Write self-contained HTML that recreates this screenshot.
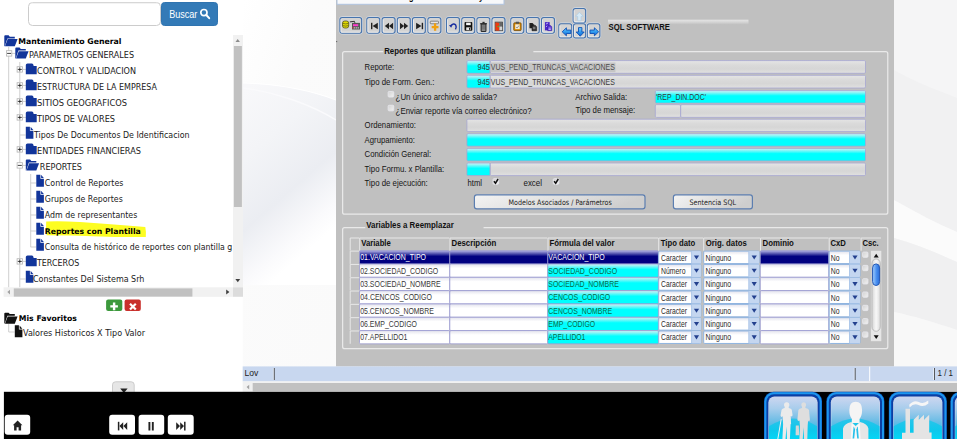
<!DOCTYPE html>
<html><head><meta charset="utf-8"><title>Mantenimiento General</title>
<style>
html,body{margin:0;padding:0;background:#fff;}
body{width:957px;height:439px;overflow:hidden;position:relative;font-family:"Liberation Sans",sans-serif;}
svg{position:absolute;left:0;top:0;display:block;}
text{white-space:pre;}
</style></head><body>
<svg width="957" height="439" viewBox="0 0 957 439">
<defs>
<linearGradient id="gf" x1="0" y1="0" x2="0" y2="1"><stop offset="0" stop-color="#e5e5e5"/><stop offset=".35" stop-color="#dadada"/><stop offset=".65" stop-color="#d6d6d6"/><stop offset="1" stop-color="#e0e0e0"/></linearGradient>
<linearGradient id="gc" x1="0" y1="0" x2="0" y2="1"><stop offset="0" stop-color="#c4f6f8"/><stop offset=".12" stop-color="#a0f4f6"/><stop offset=".42" stop-color="#00ffff"/><stop offset="1" stop-color="#00ffff"/></linearGradient>
<linearGradient id="gw" x1="0" y1="0" x2="0" y2="1"><stop offset="0" stop-color="#e2e2ec"/><stop offset=".32" stop-color="#ffffff"/><stop offset="1" stop-color="#ffffff"/></linearGradient>
<linearGradient id="gs" x1="0" y1="0" x2="0" y2="1"><stop offset="0" stop-color="#b0b0e4"/><stop offset=".42" stop-color="#000080"/><stop offset="1" stop-color="#000080"/></linearGradient>
<linearGradient id="gb" x1="0" y1="0" x2="1" y2="0.25"><stop offset="0" stop-color="#f4f4f4"/><stop offset=".6" stop-color="#dedede"/><stop offset="1" stop-color="#cecece"/></linearGradient>
<linearGradient id="gk" x1="0" y1="0" x2="1" y2="1"><stop offset="0" stop-color="#d2d2d2"/><stop offset="1" stop-color="#f2f2f2"/></linearGradient>
<linearGradient id="gth" x1="0" y1="0" x2="1" y2="0"><stop offset="0" stop-color="#a4d0ff"/><stop offset=".55" stop-color="#4a90f0"/><stop offset="1" stop-color="#2a6cd8"/></linearGradient>
<linearGradient id="gtr" x1="0" y1="0" x2="1" y2="0"><stop offset="0" stop-color="#d6d6d6"/><stop offset=".5" stop-color="#f8f8f8"/><stop offset="1" stop-color="#dcdcdc"/></linearGradient>
<linearGradient id="garr" x1="0" y1="0" x2="0" y2="1"><stop offset="0" stop-color="#7ad2ff"/><stop offset=".5" stop-color="#2f9cf0"/><stop offset="1" stop-color="#1262d4"/></linearGradient>
<linearGradient id="gbar" x1="0" y1="0" x2="0" y2="1"><stop offset="0" stop-color="#e4e4e4"/><stop offset=".5" stop-color="#d6d6d6"/><stop offset="1" stop-color="#c2c2c2"/></linearGradient>
<linearGradient id="gtile" x1="0" y1="0" x2="0" y2="1"><stop offset="0" stop-color="#ccd6f0"/><stop offset=".2" stop-color="#a8cdec"/><stop offset=".4" stop-color="#70bee6"/><stop offset=".55" stop-color="#3cbce8"/></linearGradient>
<linearGradient id="gdome" x1="0" y1="0" x2="0" y2="1"><stop offset="0" stop-color="#2cc4ea"/><stop offset=".35" stop-color="#0cc8ec"/><stop offset=".7" stop-color="#00dcfa"/></linearGradient>
<linearGradient id="gdesk" x1="0" y1="0" x2="1" y2="0.2"><stop offset="0" stop-color="#ffffff"/><stop offset=".1" stop-color="#fbfbfb"/><stop offset="1" stop-color="#f6f6f7"/></linearGradient>
<linearGradient id="gsw" x1="0.1" y1="0" x2="0.5" y2="1"><stop offset="0" stop-color="#f8f8fa"/><stop offset=".3" stop-color="#f3f4f7"/><stop offset=".6" stop-color="#ebedf2"/><stop offset=".82" stop-color="#fafafc"/><stop offset=".92" stop-color="#ffffff"/></linearGradient>
<clipPath id="cptree"><rect x="0" y="30" width="233" height="257.5"/></clipPath>
<clipPath id="cpmenu"><rect x="337" y="0" width="167" height="4.5"/></clipPath>
</defs>

<rect x="242.7" y="0" width="715" height="392" fill="url(#gdesk)"/>
<path d="M243 83 C275 84 310 90 336 100 L336 285 L243 285Z" fill="url(#gsw)"/>
<path d="M243 83 C275 84 310 90 336 100" stroke="#fff" stroke-width="1.2" fill="none"/><path d="M243 88 C275 92 310 104 336 120" stroke="#fafafc" stroke-width="1.4" fill="none"/>
<path d="M894 0 L957 0 L957 392 L894 392Z" fill="#f5f5f6"/><path d="M894 70 C923 86 943 92 957 98 L957 232 C940 225 915 212 894 200Z" fill="#f1f1f2"/><path d="M894 200 C915 212 940 225 957 232 L957 262 C935 252 915 244 894 238Z" fill="#fbfbfb"/><path d="M894 238 C915 244 935 252 957 262 L957 330 C933 322 913 316 894 312Z" fill="#f0f0f1"/><path d="M894 312 C913 316 933 322 957 330 L957 392 L894 392Z" fill="#f8f8f8"/>
<rect x="28.50" y="2.50" width="132.00" height="23.00" fill="#fff" stroke="#ccc" stroke-width="1" rx="4"/>
<path d="M31 3.2 L158 3.2" stroke="#eee" stroke-width="1" fill="none"/>
<rect x="161.50" y="2.50" width="56.00" height="23.00" fill="#337ab7" stroke="#3074b0" stroke-width="1" rx="3"/>
<text x="169.2" y="18.32" font-family="Liberation Sans, sans-serif" font-size="10.4" fill="#fff" textLength="28.2" lengthAdjust="spacingAndGlyphs">Buscar</text>
<g transform="translate(199.5 8.2)"><circle cx="4.4" cy="4.4" r="3.1" fill="none" stroke="#fff" stroke-width="1.7"/><path d="M6.8 6.8 L9.7 10" stroke="#fff" stroke-width="2" stroke-linecap="round"/></g>
<g clip-path="url(#cptree)">
<path d="M8.7 47 L8.7 288" stroke="#cfcfcf" stroke-width="1" fill="none"/>
<path d="M19.8 62 L19.8 288" stroke="#cfcfcf" stroke-width="1" fill="none"/>
<path d="M30.7 174 L30.7 247" stroke="#cfcfcf" stroke-width="1" fill="none"/>
<path d="M46.2 221.6 Q58 220.6 80 222.1 Q115 224.6 145.3 227 Q146.2 231 145.8 237 Q120 237.4 100 236.4 Q70 235.4 46.6 235.3 Q45.6 228 46.2 221.6Z" fill="#fdfd22"/>
<g transform="translate(4 35.0)"><path d="M0.3 11.2 L0.3 1.3 Q0.3 0.3 1.2 0.3 L4.6 0.3 L5.8 1.7 L10.8 1.7 L10.8 3.4 L3.4 3.4 L0.8 11.2Z" fill="#12359a"/><path d="M3.7 4.1 L13.6 4.1 L10.8 11.3 L1 11.3Z" fill="#12359a"/></g>
<text x="18.3" y="44.05" font-family="DejaVu Sans, Liberation Sans, sans-serif" font-size="7.8" fill="#000" font-weight="bold" textLength="103.2" lengthAdjust="spacingAndGlyphs">Mantenimiento General</text>
<path d="M11.8 53.4 L15.5 53.4" stroke="#cfcfcf" stroke-width="1" fill="none"/>
<g transform="translate(6 50.3)"><rect x="0.4" y="0.4" width="5.4" height="5.4" fill="#fff" stroke="#b4b4b4" stroke-width=".8"/><path d="M1.1 3.1 L5.1 3.1" stroke="#111" stroke-width=".8"/></g>
<g transform="translate(15 47.2)"><path d="M0.3 11.2 L0.3 1.3 Q0.3 0.3 1.2 0.3 L4.6 0.3 L5.8 1.7 L10.8 1.7 L10.8 3.4 L3.4 3.4 L0.8 11.2Z" fill="#12359a"/><path d="M3.7 4.1 L13.6 4.1 L10.8 11.3 L1 11.3Z" fill="#12359a"/></g>
<text x="29" y="58.12" font-family="DejaVu Sans, Liberation Sans, sans-serif" font-size="8" fill="#1a1a1a" textLength="105" lengthAdjust="spacingAndGlyphs">PARAMETROS GENERALES</text>
<path d="M22.5 69.4 L26.0 69.4" stroke="#cfcfcf" stroke-width="1" fill="none"/>
<g transform="translate(16.7 66.3)"><rect x="0.4" y="0.4" width="5.4" height="5.4" fill="#fff" stroke="#b4b4b4" stroke-width=".8"/><path d="M1.1 3.1 L5.1 3.1" stroke="#111" stroke-width=".8"/><path d="M3.1 1.1 L3.1 5.1" stroke="#111" stroke-width=".8"/></g>
<g transform="translate(25.5 63.3)"><path d="M0.3 1.8 Q0.3 0.2 2 0.2 L6.4 0.2 Q7.8 0.2 8.2 2.6 L11.2 2.6 L11.2 11 L0.3 11Z" fill="#12359a"/></g>
<text x="37" y="74.12" font-family="DejaVu Sans, Liberation Sans, sans-serif" font-size="8" fill="#1a1a1a" textLength="99" lengthAdjust="spacingAndGlyphs">CONTROL Y VALIDACION</text>
<path d="M22.5 85.4 L26.0 85.4" stroke="#cfcfcf" stroke-width="1" fill="none"/>
<g transform="translate(16.7 82.3)"><rect x="0.4" y="0.4" width="5.4" height="5.4" fill="#fff" stroke="#b4b4b4" stroke-width=".8"/><path d="M1.1 3.1 L5.1 3.1" stroke="#111" stroke-width=".8"/><path d="M3.1 1.1 L3.1 5.1" stroke="#111" stroke-width=".8"/></g>
<g transform="translate(25.5 79.3)"><path d="M0.3 1.8 Q0.3 0.2 2 0.2 L6.4 0.2 Q7.8 0.2 8.2 2.6 L11.2 2.6 L11.2 11 L0.3 11Z" fill="#12359a"/></g>
<text x="37" y="90.12" font-family="DejaVu Sans, Liberation Sans, sans-serif" font-size="8" fill="#1a1a1a" textLength="120" lengthAdjust="spacingAndGlyphs">ESTRUCTURA DE LA EMPRESA</text>
<path d="M22.5 101.4 L26.0 101.4" stroke="#cfcfcf" stroke-width="1" fill="none"/>
<g transform="translate(16.7 98.3)"><rect x="0.4" y="0.4" width="5.4" height="5.4" fill="#fff" stroke="#b4b4b4" stroke-width=".8"/><path d="M1.1 3.1 L5.1 3.1" stroke="#111" stroke-width=".8"/><path d="M3.1 1.1 L3.1 5.1" stroke="#111" stroke-width=".8"/></g>
<g transform="translate(25.5 95.3)"><path d="M0.3 1.8 Q0.3 0.2 2 0.2 L6.4 0.2 Q7.8 0.2 8.2 2.6 L11.2 2.6 L11.2 11 L0.3 11Z" fill="#12359a"/></g>
<text x="37" y="106.12" font-family="DejaVu Sans, Liberation Sans, sans-serif" font-size="8" fill="#1a1a1a" textLength="90" lengthAdjust="spacingAndGlyphs">SITIOS GEOGRAFICOS</text>
<path d="M22.5 117.4 L26.0 117.4" stroke="#cfcfcf" stroke-width="1" fill="none"/>
<g transform="translate(16.7 114.3)"><rect x="0.4" y="0.4" width="5.4" height="5.4" fill="#fff" stroke="#b4b4b4" stroke-width=".8"/><path d="M1.1 3.1 L5.1 3.1" stroke="#111" stroke-width=".8"/><path d="M3.1 1.1 L3.1 5.1" stroke="#111" stroke-width=".8"/></g>
<g transform="translate(25.5 111.3)"><path d="M0.3 1.8 Q0.3 0.2 2 0.2 L6.4 0.2 Q7.8 0.2 8.2 2.6 L11.2 2.6 L11.2 11 L0.3 11Z" fill="#12359a"/></g>
<text x="37" y="122.12" font-family="DejaVu Sans, Liberation Sans, sans-serif" font-size="8" fill="#1a1a1a" textLength="78" lengthAdjust="spacingAndGlyphs">TIPOS DE VALORES</text>
<path d="M20.0 135 L25.5 135" stroke="#cfcfcf" stroke-width="1" fill="none"/>
<g transform="translate(25.5 126.4)"><path d="M0.3 0.3 L4.4 0.3 L4.4 4.4 L7.9 4.4 L7.9 12.3 L0.3 12.3Z" fill="#12359a"/><path d="M5.1 0.4 L7.8 3.7 L5.1 3.7Z" fill="#12359a"/></g>
<text x="34" y="138.12" font-family="DejaVu Sans, Liberation Sans, sans-serif" font-size="8" fill="#1a1a1a" textLength="155.5" lengthAdjust="spacingAndGlyphs">Tipos De Documentos De Identificacion</text>
<path d="M22.5 149.4 L26.0 149.4" stroke="#cfcfcf" stroke-width="1" fill="none"/>
<g transform="translate(16.7 146.3)"><rect x="0.4" y="0.4" width="5.4" height="5.4" fill="#fff" stroke="#b4b4b4" stroke-width=".8"/><path d="M1.1 3.1 L5.1 3.1" stroke="#111" stroke-width=".8"/><path d="M3.1 1.1 L3.1 5.1" stroke="#111" stroke-width=".8"/></g>
<g transform="translate(25.5 143.3)"><path d="M0.3 1.8 Q0.3 0.2 2 0.2 L6.4 0.2 Q7.8 0.2 8.2 2.6 L11.2 2.6 L11.2 11 L0.3 11Z" fill="#12359a"/></g>
<text x="37" y="154.12" font-family="DejaVu Sans, Liberation Sans, sans-serif" font-size="8" fill="#1a1a1a" textLength="104" lengthAdjust="spacingAndGlyphs">ENTIDADES FINANCIERAS</text>
<path d="M22.5 165.4 L26.0 165.4" stroke="#cfcfcf" stroke-width="1" fill="none"/>
<g transform="translate(16.7 162.3)"><rect x="0.4" y="0.4" width="5.4" height="5.4" fill="#fff" stroke="#b4b4b4" stroke-width=".8"/><path d="M1.1 3.1 L5.1 3.1" stroke="#111" stroke-width=".8"/></g>
<g transform="translate(25.5 159.2)"><path d="M0.3 11.2 L0.3 1.3 Q0.3 0.3 1.2 0.3 L4.6 0.3 L5.8 1.7 L10.8 1.7 L10.8 3.4 L3.4 3.4 L0.8 11.2Z" fill="#12359a"/><path d="M3.7 4.1 L13.6 4.1 L10.8 11.3 L1 11.3Z" fill="#12359a"/></g>
<text x="39.8" y="170.12" font-family="DejaVu Sans, Liberation Sans, sans-serif" font-size="8" fill="#1a1a1a" textLength="42.2" lengthAdjust="spacingAndGlyphs">REPORTES</text>
<path d="M30.5 183 L36 183" stroke="#cfcfcf" stroke-width="1" fill="none"/>
<g transform="translate(36 174.4)"><path d="M0.3 0.3 L4.4 0.3 L4.4 4.4 L7.9 4.4 L7.9 12.3 L0.3 12.3Z" fill="#12359a"/><path d="M5.1 0.4 L7.8 3.7 L5.1 3.7Z" fill="#12359a"/></g>
<text x="44.8" y="186.12" font-family="DejaVu Sans, Liberation Sans, sans-serif" font-size="8" fill="#1a1a1a" textLength="78.6" lengthAdjust="spacingAndGlyphs">Control de Reportes</text>
<path d="M30.5 199 L36 199" stroke="#cfcfcf" stroke-width="1" fill="none"/>
<g transform="translate(36 190.4)"><path d="M0.3 0.3 L4.4 0.3 L4.4 4.4 L7.9 4.4 L7.9 12.3 L0.3 12.3Z" fill="#12359a"/><path d="M5.1 0.4 L7.8 3.7 L5.1 3.7Z" fill="#12359a"/></g>
<text x="44.8" y="202.12" font-family="DejaVu Sans, Liberation Sans, sans-serif" font-size="8" fill="#1a1a1a" textLength="78" lengthAdjust="spacingAndGlyphs">Grupos de Reportes</text>
<path d="M30.5 215 L36 215" stroke="#cfcfcf" stroke-width="1" fill="none"/>
<g transform="translate(36 206.4)"><path d="M0.3 0.3 L4.4 0.3 L4.4 4.4 L7.9 4.4 L7.9 12.3 L0.3 12.3Z" fill="#12359a"/><path d="M5.1 0.4 L7.8 3.7 L5.1 3.7Z" fill="#12359a"/></g>
<text x="44.8" y="218.12" font-family="DejaVu Sans, Liberation Sans, sans-serif" font-size="8" fill="#1a1a1a" textLength="92.5" lengthAdjust="spacingAndGlyphs">Adm de representantes</text>
<path d="M30.5 231 L36 231" stroke="#cfcfcf" stroke-width="1" fill="none"/>
<g transform="translate(36 222.4)"><path d="M0.3 0.3 L4.4 0.3 L4.4 4.4 L7.9 4.4 L7.9 12.3 L0.3 12.3Z" fill="#12359a"/><path d="M5.1 0.4 L7.8 3.7 L5.1 3.7Z" fill="#12359a"/></g>
<text x="44.8" y="234.05" font-family="DejaVu Sans, Liberation Sans, sans-serif" font-size="7.8" fill="#000" font-weight="bold" textLength="96" lengthAdjust="spacingAndGlyphs">Reportes con Plantilla</text>
<path d="M30.5 247 L36 247" stroke="#cfcfcf" stroke-width="1" fill="none"/>
<g transform="translate(36 238.4)"><path d="M0.3 0.3 L4.4 0.3 L4.4 4.4 L7.9 4.4 L7.9 12.3 L0.3 12.3Z" fill="#12359a"/><path d="M5.1 0.4 L7.8 3.7 L5.1 3.7Z" fill="#12359a"/></g>
<text x="44.8" y="250.12" font-family="DejaVu Sans, Liberation Sans, sans-serif" font-size="8" fill="#1a1a1a" textLength="187.5" lengthAdjust="spacingAndGlyphs">Consulta de histórico de reportes con plantilla g</text>
<path d="M22.5 261.4 L26.0 261.4" stroke="#cfcfcf" stroke-width="1" fill="none"/>
<g transform="translate(16.7 258.3)"><rect x="0.4" y="0.4" width="5.4" height="5.4" fill="#fff" stroke="#b4b4b4" stroke-width=".8"/><path d="M1.1 3.1 L5.1 3.1" stroke="#111" stroke-width=".8"/><path d="M3.1 1.1 L3.1 5.1" stroke="#111" stroke-width=".8"/></g>
<g transform="translate(25.5 255.3)"><path d="M0.3 1.8 Q0.3 0.2 2 0.2 L6.4 0.2 Q7.8 0.2 8.2 2.6 L11.2 2.6 L11.2 11 L0.3 11Z" fill="#12359a"/></g>
<text x="37" y="266.12" font-family="DejaVu Sans, Liberation Sans, sans-serif" font-size="8" fill="#1a1a1a" textLength="42.3" lengthAdjust="spacingAndGlyphs">TERCEROS</text>
<path d="M20.0 279 L25.5 279" stroke="#cfcfcf" stroke-width="1" fill="none"/>
<g transform="translate(25.5 270.4)"><path d="M0.3 0.3 L4.4 0.3 L4.4 4.4 L7.9 4.4 L7.9 12.3 L0.3 12.3Z" fill="#12359a"/><path d="M5.1 0.4 L7.8 3.7 L5.1 3.7Z" fill="#12359a"/></g>
<text x="33" y="282.12" font-family="DejaVu Sans, Liberation Sans, sans-serif" font-size="8" fill="#1a1a1a" textLength="111.4" lengthAdjust="spacingAndGlyphs">Constantes Del Sistema Srh</text>
</g>
<rect x="233" y="35" width="10" height="252.3" fill="#f1f1f1"/>
<rect x="233.9" y="46" width="8" height="161" fill="#c1c1c1"/>
<path d="M235.5 41.9 L237.7 39.1 L239.9 41.9Z" fill="#8c8c8c"/><path d="M235.4 279 L237.8 282.2 L240.2 279Z" fill="#404040"/>
<rect x="3.6" y="287.3" width="229.4" height="9.5" fill="#f1f1f1"/>
<rect x="13.8" y="288.4" width="178.6" height="8.2" fill="#c1c1c1"/>
<rect x="233" y="287.3" width="10" height="9.5" fill="#dcdcdc"/>
<path d="M10 289.7 L7.3 292.1 L10 294.5Z" fill="#a3a3a3"/><path d="M226.2 289.6 L229.4 292.1 L226.2 294.6Z" fill="#404040"/>
<rect x="106.1" y="299.4" width="16.2" height="11.5" fill="#3c993c" rx="2"/>
<path d="M114.1 302.6 V310.2 M110.3 306.4 H117.9" stroke="#fff" stroke-width="2.4"/>
<rect x="124.6" y="299.4" width="16.2" height="11.5" fill="#c9302c" rx="2"/>
<path d="M130 303.7 L135.8 309.5 M135.8 303.7 L130 309.5" stroke="#fff" stroke-width="2.2"/>
<g transform="translate(4 312.4)"><path d="M0.3 11.2 L0.3 1.3 Q0.3 0.3 1.2 0.3 L4.6 0.3 L5.8 1.7 L10.8 1.7 L10.8 3.4 L3.4 3.4 L0.8 11.2Z" fill="#111"/><path d="M3.7 4.1 L13.6 4.1 L10.8 11.3 L1 11.3Z" fill="#111"/></g>
<text x="18.8" y="321.05" font-family="DejaVu Sans, Liberation Sans, sans-serif" font-size="7.8" fill="#000" font-weight="bold" textLength="58" lengthAdjust="spacingAndGlyphs">Mis Favoritos</text>
<path d="M8.7 324 L8.7 332" stroke="#cfcfcf" stroke-width="1" fill="none"/>
<path d="M8.7 332 L14.5 332" stroke="#cfcfcf" stroke-width="1" fill="none"/>
<g transform="translate(14.5 325.0)"><path d="M0.3 0.3 L4.4 0.3 L4.4 4.4 L7.9 4.4 L7.9 12.3 L0.3 12.3Z" fill="#111"/><path d="M5.1 0.4 L7.8 3.7 L5.1 3.7Z" fill="#111"/></g>
<text x="23" y="335.62" font-family="DejaVu Sans, Liberation Sans, sans-serif" font-size="8" fill="#1a1a1a" textLength="122" lengthAdjust="spacingAndGlyphs">Valores Historicos X Tipo Valor</text>
<rect x="112.50" y="381.80" width="21.70" height="13.00" fill="#e6e6e6" stroke="#ccc" stroke-width="1" rx="3"/>
<path d="M120.2 388.5 L127.6 388.5 L123.9 393Z" fill="#222"/>
<rect x="336" y="0" width="558" height="366.5" fill="#c0c0c0"/>
<rect x="336.1" y="41.1" width="1.1" height="1" fill="#5a5a5a"/>
<rect x="337.00" y="-1.50" width="167.00" height="5.80" fill="#f7f8fa" stroke="#b0c4e0" stroke-width="1"/>
<g clip-path="url(#cpmenu)">
<text x="340.5" y="0.16" font-family="Liberation Sans, sans-serif" font-size="10.5" fill="#111" font-weight="bold" textLength="157" lengthAdjust="spacingAndGlyphs">Acción  Editar  Registro  Consulta  Ayuda</text>
</g>
<rect x="339.10" y="16.70" width="23.40" height="17.40" fill="none" stroke="#d6dde8" stroke-width="0.8" rx="2.8"/>
<rect x="339.95" y="17.55" width="21.70" height="15.70" fill="#d3d3d3" stroke="#4674ae" stroke-width="1.1" rx="2.2"/>
<path d="M341.0 19.4 V32.199999999999996 H360.0" stroke="#f2f2f2" stroke-width=".9" fill="none" opacity=".85"/>
<rect x="366.00" y="16.70" width="14.60" height="17.40" fill="none" stroke="#d6dde8" stroke-width="0.8" rx="2.8"/>
<rect x="366.85" y="17.55" width="12.90" height="15.70" fill="#d3d3d3" stroke="#4674ae" stroke-width="1.1" rx="2.2"/>
<path d="M367.90000000000003 19.4 V32.199999999999996 H378.1" stroke="#f2f2f2" stroke-width=".9" fill="none" opacity=".85"/>
<rect x="381.30" y="16.70" width="14.60" height="17.40" fill="none" stroke="#d6dde8" stroke-width="0.8" rx="2.8"/>
<rect x="382.15" y="17.55" width="12.90" height="15.70" fill="#d3d3d3" stroke="#4674ae" stroke-width="1.1" rx="2.2"/>
<path d="M383.20000000000005 19.4 V32.199999999999996 H393.40000000000003" stroke="#f2f2f2" stroke-width=".9" fill="none" opacity=".85"/>
<rect x="396.50" y="16.70" width="14.60" height="17.40" fill="none" stroke="#d6dde8" stroke-width="0.8" rx="2.8"/>
<rect x="397.35" y="17.55" width="12.90" height="15.70" fill="#d3d3d3" stroke="#4674ae" stroke-width="1.1" rx="2.2"/>
<path d="M398.40000000000003 19.4 V32.199999999999996 H408.6" stroke="#f2f2f2" stroke-width=".9" fill="none" opacity=".85"/>
<rect x="411.60" y="16.70" width="14.60" height="17.40" fill="none" stroke="#d6dde8" stroke-width="0.8" rx="2.8"/>
<rect x="412.45" y="17.55" width="12.90" height="15.70" fill="#d3d3d3" stroke="#4674ae" stroke-width="1.1" rx="2.2"/>
<path d="M413.5 19.4 V32.199999999999996 H423.7" stroke="#f2f2f2" stroke-width=".9" fill="none" opacity=".85"/>
<rect x="427.10" y="16.70" width="14.60" height="17.40" fill="none" stroke="#d6dde8" stroke-width="0.8" rx="2.8"/>
<rect x="427.95" y="17.55" width="12.90" height="15.70" fill="#d3d3d3" stroke="#4674ae" stroke-width="1.1" rx="2.2"/>
<path d="M429.0 19.4 V32.199999999999996 H439.2" stroke="#f2f2f2" stroke-width=".9" fill="none" opacity=".85"/>
<rect x="445.70" y="16.70" width="14.60" height="17.40" fill="none" stroke="#d6dde8" stroke-width="0.8" rx="2.8"/>
<rect x="446.55" y="17.55" width="12.90" height="15.70" fill="#d3d3d3" stroke="#4674ae" stroke-width="1.1" rx="2.2"/>
<path d="M447.6 19.4 V32.199999999999996 H457.8" stroke="#f2f2f2" stroke-width=".9" fill="none" opacity=".85"/>
<rect x="461.00" y="16.70" width="14.60" height="17.40" fill="none" stroke="#d6dde8" stroke-width="0.8" rx="2.8"/>
<rect x="461.85" y="17.55" width="12.90" height="15.70" fill="#d3d3d3" stroke="#4674ae" stroke-width="1.1" rx="2.2"/>
<path d="M462.90000000000003 19.4 V32.199999999999996 H473.1" stroke="#f2f2f2" stroke-width=".9" fill="none" opacity=".85"/>
<rect x="476.10" y="16.70" width="14.60" height="17.40" fill="none" stroke="#d6dde8" stroke-width="0.8" rx="2.8"/>
<rect x="476.95" y="17.55" width="12.90" height="15.70" fill="#d3d3d3" stroke="#4674ae" stroke-width="1.1" rx="2.2"/>
<path d="M478.0 19.4 V32.199999999999996 H488.2" stroke="#f2f2f2" stroke-width=".9" fill="none" opacity=".85"/>
<rect x="491.20" y="16.70" width="14.60" height="17.40" fill="none" stroke="#d6dde8" stroke-width="0.8" rx="2.8"/>
<rect x="492.05" y="17.55" width="12.90" height="15.70" fill="#d3d3d3" stroke="#4674ae" stroke-width="1.1" rx="2.2"/>
<path d="M493.1 19.4 V32.199999999999996 H503.3" stroke="#f2f2f2" stroke-width=".9" fill="none" opacity=".85"/>
<rect x="510.00" y="16.70" width="14.60" height="17.40" fill="none" stroke="#d6dde8" stroke-width="0.8" rx="2.8"/>
<rect x="510.85" y="17.55" width="12.90" height="15.70" fill="#d3d3d3" stroke="#4674ae" stroke-width="1.1" rx="2.2"/>
<path d="M511.90000000000003 19.4 V32.199999999999996 H522.0999999999999" stroke="#f2f2f2" stroke-width=".9" fill="none" opacity=".85"/>
<rect x="525.50" y="16.70" width="14.60" height="17.40" fill="none" stroke="#d6dde8" stroke-width="0.8" rx="2.8"/>
<rect x="526.35" y="17.55" width="12.90" height="15.70" fill="#d3d3d3" stroke="#4674ae" stroke-width="1.1" rx="2.2"/>
<path d="M527.4 19.4 V32.199999999999996 H537.5999999999999" stroke="#f2f2f2" stroke-width=".9" fill="none" opacity=".85"/>
<rect x="540.70" y="16.70" width="14.60" height="17.40" fill="none" stroke="#d6dde8" stroke-width="0.8" rx="2.8"/>
<rect x="541.55" y="17.55" width="12.90" height="15.70" fill="#d3d3d3" stroke="#4674ae" stroke-width="1.1" rx="2.2"/>
<path d="M542.6 19.4 V32.199999999999996 H552.8" stroke="#f2f2f2" stroke-width=".9" fill="none" opacity=".85"/>
<rect x="572.30" y="7.70" width="14.20" height="15.80" fill="none" stroke="#d6dde8" stroke-width="0.8" rx="2.8"/>
<rect x="573.15" y="8.55" width="12.50" height="14.10" fill="#d3d3d3" stroke="#4674ae" stroke-width="1.1" rx="2.2"/>
<path d="M574.2 10.4 V21.599999999999998 H584.0" stroke="#f2f2f2" stroke-width=".9" fill="none" opacity=".85"/>
<rect x="558.00" y="22.90" width="14.60" height="15.80" fill="none" stroke="#d6dde8" stroke-width="0.8" rx="2.8"/>
<rect x="558.85" y="23.75" width="12.90" height="14.10" fill="#d3d3d3" stroke="#4674ae" stroke-width="1.1" rx="2.2"/>
<path d="M559.9 25.599999999999998 V36.8 H570.0999999999999" stroke="#f2f2f2" stroke-width=".9" fill="none" opacity=".85"/>
<rect x="572.70" y="22.90" width="13.80" height="15.80" fill="none" stroke="#d6dde8" stroke-width="0.8" rx="2.8"/>
<rect x="573.55" y="23.75" width="12.10" height="14.10" fill="#d3d3d3" stroke="#4674ae" stroke-width="1.1" rx="2.2"/>
<path d="M574.6 25.599999999999998 V36.8 H584.0" stroke="#f2f2f2" stroke-width=".9" fill="none" opacity=".85"/>
<rect x="586.50" y="22.90" width="14.20" height="15.80" fill="none" stroke="#d6dde8" stroke-width="0.8" rx="2.8"/>
<rect x="587.35" y="23.75" width="12.50" height="14.10" fill="#d3d3d3" stroke="#4674ae" stroke-width="1.1" rx="2.2"/>
<path d="M588.4 25.599999999999998 V36.8 H598.1999999999999" stroke="#f2f2f2" stroke-width=".9" fill="none" opacity=".85"/>
<g transform="translate(0 0)"><rect x="342.5" y="21" width="6.2" height="7" rx="2.2" fill="#e4dc00" stroke="#55551c" stroke-width=".8"/><path d="M342.6 23.3 Q345.6 24.6 348.6 23.3 M342.6 25.5 Q345.6 26.8 348.6 25.5" stroke="#55551c" stroke-width=".7" fill="none"/><rect x="352" y="22.9" width="8" height="6.6" fill="#555"/><rect x="353" y="24.2" width="5.4" height="2" fill="#ff3ccc"/><rect x="358.5" y="24.2" width="1" height="2" fill="#3a8a5a"/><path d="M353.6 27.8 h5.6" stroke="#cfcfcf" stroke-width="1.3" stroke-dasharray="1.3 .7"/><rect x="352.4" y="27.2" width="1" height="1.3" fill="#e03030"/><path d="M349.8 21.9 L354.4 21.3 L354.9 22.9" stroke="#222" stroke-width=".9" fill="none"/></g>
<g transform="translate(366.3 17)"><path d="M5.4 5.8 v6.4" stroke="#222" stroke-width="1.4"/><path d="M11.5 5.8 L6.3 9 L11.5 12.2Z" fill="#222"/></g>
<g transform="translate(381.6 17)"><path d="M7.4 5.8 L3.2 9 L7.4 12.2Z M11.5 5.8 L7.3 9 L11.5 12.2Z" fill="#222"/></g>
<g transform="translate(396.8 17)"><path d="M3.2 5.8 L7.4 9 L3.2 12.2Z M7.2 5.8 L11.4 9 L7.2 12.2Z" fill="#222"/></g>
<g transform="translate(411.9 17)"><path d="M10.5 5.8 v6.4" stroke="#222" stroke-width="1.4"/><path d="M4.2 5.8 L9.6 9 L4.2 12.2Z" fill="#222"/></g>
<g transform="translate(428.0 18.5) scale(.92 .9)"><rect x="2.4" y="3" width="9" height="2.8" rx=".8" fill="#e4e4e4" stroke="#555" stroke-width=".7"/><path d="M7.7 5.4 V13.6 M4 9.5 H11.4" stroke="#f0a010" stroke-width="2.5"/></g>
<g transform="translate(446.6 18.5) scale(.92 .9)"><path d="M4.6 8.3 Q7.4 4.6 9.9 7.3 Q11.2 9.6 9.6 12.2" stroke="#1a2fa0" stroke-width="1.6" fill="none"/><path d="M2.6 7.4 L6.4 6.8 L5 10.4Z" fill="#1a2fa0"/></g>
<g transform="translate(461.90000000000003 18.5) scale(.92 .9)"><rect x="2.9" y="4" width="8.4" height="9.6" rx="1" fill="#111"/><rect x="4.6" y="4.6" width="5" height="2.8" fill="#f4f4f4"/><rect x="4.7" y="9.8" width="4.8" height="3.2" fill="#e8e8e8"/><rect x="7.8" y="10.3" width="1.1" height="2.3" fill="#111"/></g>
<g transform="translate(477.0 18.5) scale(.92 .9)"><rect x="4.5" y="6" width="5.2" height="8.4" rx=".8" fill="#8c8c8c" stroke="#2c2c2c" stroke-width="1.2"/><path d="M3.4 5.8 h7.4" stroke="#2c2c2c" stroke-width="1.3"/><path d="M5.9 4.4 h2.4" stroke="#2c2c2c" stroke-width="1.4"/><path d="M6.4 7.4 v4.8 M7.8 7.4 v4.8" stroke="#555" stroke-width=".6"/></g>
<g transform="translate(492.1 18.5) scale(.92 .9)"><rect x="3.3" y="4" width="8" height="9.6" fill="#888" stroke="#333" stroke-width=".8"/><path d="M3.6 4.2 L7.8 5 L7.8 13.6 L3.6 13.2Z" fill="#ee3a10"/><rect x="8.1" y="4.6" width="2.9" height="3.8" fill="#666"/><rect x="8.1" y="9.2" width="2.9" height="3.8" fill="#d4d4d4"/><circle cx="6.6" cy="8.8" r=".8" fill="#3c3"/></g>
<g transform="translate(510.90000000000003 18.5) scale(.92 .9)"><rect x="3.1" y="4.8" width="8" height="8.6" rx="1" fill="#d98a00" stroke="#6b4200" stroke-width=".8"/><rect x="4.7" y="6.5" width="4.9" height="5.3" fill="#f2ead8"/><rect x="5.4" y="3.6" width="3.4" height="2.2" fill="#555"/><path d="M5.6 9.6 L6.8 10.6 L8.8 7.8" stroke="#777" stroke-width=".8" fill="none"/></g>
<g transform="translate(526.4 18.5) scale(.92 .9)"><path d="M3.3 5 h3.3 l1.4 1.4 v4.3 h-4.7Z" fill="#222"/><path d="M6.1 7.4 h3.3 l1.7 1.7 v4.5 h-5Z" fill="#333" stroke="#111" stroke-width=".6"/><path d="M7 9.8 h2.8 M7 11.3 h2.8" stroke="#bbb" stroke-width=".7"/></g>
<g transform="translate(541.6 18.5) scale(.92 .9)"><path d="M3.6 4 h5.2 v9.2 h-5.2Z" fill="#4a25c8"/><path d="M6.6 7.8 h3.2 l1.3 1.3 v4.4 h-4.5Z" fill="#5a35d8" stroke="#2a1590" stroke-width=".5"/><path d="M4.7 6.2 L7 5 M4.7 9.3 L6.2 8.2 M7.5 10.7 h2.5 M7.5 12.2 h2.5" stroke="#e8e0ff" stroke-width=".8"/></g>
<polygon points="579.40,12.20 583.40,16.40 581.10,16.40 581.10,20.80 577.70,20.80 577.70,16.40 575.40,16.40" fill="#d6eaf6" stroke="#b6d0e4" stroke-width=".9" stroke-linejoin="round"/>
<polygon points="562.20,31.80 566.40,27.80 566.40,30.10 570.80,30.10 570.80,33.50 566.40,33.50 566.40,35.80" fill="url(#garr)" stroke="#0d4fb4" stroke-width=".9" stroke-linejoin="round"/>
<polygon points="580.20,36.20 576.20,32.00 578.50,32.00 578.50,27.60 581.90,27.60 581.90,32.00 584.20,32.00" fill="url(#garr)" stroke="#0d4fb4" stroke-width=".9" stroke-linejoin="round"/>
<polygon points="598.60,31.80 594.40,35.80 594.40,33.50 590.00,33.50 590.00,30.10 594.40,30.10 594.40,27.80" fill="url(#garr)" stroke="#0d4fb4" stroke-width=".9" stroke-linejoin="round"/>
<rect x="608" y="19.7" width="140.5" height="4.6" fill="url(#gbar)"/>
<text x="608.5" y="29.54" font-family="Liberation Sans, sans-serif" font-size="9.9" fill="#111" font-weight="bold" textLength="61.5" lengthAdjust="spacingAndGlyphs">SQL SOFTWARE</text>
<rect x="342.62" y="51.62" width="545.15" height="162.55" fill="none" stroke="#e9e9e9" stroke-width="1.25" rx="2"/>
<rect x="383.2" y="50" width="150.142" height="4" fill="#c0c0c0"/>
<text x="384.2" y="54.40" font-family="Liberation Sans, sans-serif" font-size="9.5" fill="#111" font-weight="bold" textLength="111.3" lengthAdjust="spacingAndGlyphs">Reportes que utilizan plantilla</text>
<text x="364.6" y="69.54" font-family="Liberation Sans, sans-serif" font-size="9.9" fill="#151515" textLength="29.6" lengthAdjust="spacingAndGlyphs">Reporte:</text>
<text x="364.6" y="84.74" font-family="Liberation Sans, sans-serif" font-size="9.9" fill="#151515" textLength="69.8" lengthAdjust="spacingAndGlyphs">Tipo de Form. Gen.:</text>
<text x="395.6" y="100.04" font-family="Liberation Sans, sans-serif" font-size="9.9" fill="#151515" textLength="101.5" lengthAdjust="spacingAndGlyphs">¿Un único archivo de salida?</text>
<text x="395.6" y="113.84" font-family="Liberation Sans, sans-serif" font-size="9.9" fill="#151515" textLength="136" lengthAdjust="spacingAndGlyphs">¿Enviar reporte vía correo electrónico?</text>
<text x="575.2" y="99.54" font-family="Liberation Sans, sans-serif" font-size="9.9" fill="#151515" textLength="52" lengthAdjust="spacingAndGlyphs">Archivo Salida:</text>
<text x="575.5" y="113.34" font-family="Liberation Sans, sans-serif" font-size="9.9" fill="#151515" textLength="59.7" lengthAdjust="spacingAndGlyphs">Tipo de mensaje:</text>
<text x="364.6" y="128.04" font-family="Liberation Sans, sans-serif" font-size="9.9" fill="#151515" textLength="51.3" lengthAdjust="spacingAndGlyphs">Ordenamiento:</text>
<text x="364.6" y="142.74" font-family="Liberation Sans, sans-serif" font-size="9.9" fill="#151515" textLength="50.3" lengthAdjust="spacingAndGlyphs">Agrupamiento:</text>
<text x="364.6" y="157.04" font-family="Liberation Sans, sans-serif" font-size="9.9" fill="#151515" textLength="66.5" lengthAdjust="spacingAndGlyphs">Condición General:</text>
<text x="364.6" y="172.04" font-family="Liberation Sans, sans-serif" font-size="9.9" fill="#151515" textLength="79.6" lengthAdjust="spacingAndGlyphs">Tipo Formu. x Plantilla:</text>
<text x="364.6" y="186.44" font-family="Liberation Sans, sans-serif" font-size="9.9" fill="#151515" textLength="63.2" lengthAdjust="spacingAndGlyphs">Tipo de ejecución:</text>
<text x="467.5" y="186.44" font-family="Liberation Sans, sans-serif" font-size="9.9" fill="#151515" textLength="14.5" lengthAdjust="spacingAndGlyphs">html</text>
<text x="523.5" y="186.44" font-family="Liberation Sans, sans-serif" font-size="9.9" fill="#151515" textLength="18.5" lengthAdjust="spacingAndGlyphs">excel</text>
<rect x="466.90" y="60.60" width="23.20" height="12.70" fill="url(#gc)" stroke="#a6a6d2" stroke-width="0.8" rx="1.2"/>
<rect x="490.30" y="60.60" width="375.20" height="12.70" fill="url(#gf)" stroke="#a6a6d2" stroke-width="0.8" rx="1.2"/>
<text x="490" y="70.18" font-family="Liberation Sans, sans-serif" font-size="8.6" fill="#3a3a3a" text-anchor="end" textLength="12.5" lengthAdjust="spacingAndGlyphs">945</text>
<rect x="490.6" y="62.5" width="124.9" height="9.6" fill="#c5c5c5"/>
<text x="490.8" y="70.18" font-family="Liberation Sans, sans-serif" font-size="8.6" fill="#4c4c4c" textLength="124" lengthAdjust="spacingAndGlyphs">VUS_PEND_TRUNCAS_VACACIONES</text>
<rect x="466.90" y="75.30" width="23.20" height="12.70" fill="url(#gc)" stroke="#a6a6d2" stroke-width="0.8" rx="1.2"/>
<rect x="490.30" y="75.30" width="375.20" height="12.70" fill="url(#gf)" stroke="#a6a6d2" stroke-width="0.8" rx="1.2"/>
<text x="490" y="84.88" font-family="Liberation Sans, sans-serif" font-size="8.6" fill="#3a3a3a" text-anchor="end" textLength="12.5" lengthAdjust="spacingAndGlyphs">945</text>
<text x="490.8" y="84.88" font-family="Liberation Sans, sans-serif" font-size="8.6" fill="#3a3a3a" textLength="124" lengthAdjust="spacingAndGlyphs">VUS_PEND_TRUNCAS_VACACIONES</text>
<rect x="655.30" y="90.60" width="210.20" height="12.50" fill="url(#gc)" stroke="#a6a6d2" stroke-width="0.8" rx="1.2"/>
<text x="656" y="100.08" font-family="Liberation Sans, sans-serif" font-size="8.6" fill="#3a3a3a" textLength="50" lengthAdjust="spacingAndGlyphs">'REP_DIN.DOC'</text>
<rect x="655.30" y="104.70" width="25.20" height="12.70" fill="url(#gf)" stroke="#a6a6d2" stroke-width="0.8" rx="1.2"/>
<rect x="680.70" y="104.70" width="184.80" height="12.70" fill="url(#gf)" stroke="#a6a6d2" stroke-width="0.8" rx="1.2"/>
<rect x="466.90" y="119.20" width="398.60" height="12.40" fill="url(#gf)" stroke="#a6a6d2" stroke-width="0.8" rx="1.2"/>
<rect x="466.90" y="133.70" width="398.60" height="12.50" fill="url(#gc)" stroke="#a6a6d2" stroke-width="0.8" rx="1.2"/>
<rect x="466.90" y="148.40" width="398.60" height="12.50" fill="url(#gc)" stroke="#a6a6d2" stroke-width="0.8" rx="1.2"/>
<rect x="466.90" y="163.00" width="23.20" height="12.60" fill="url(#gc)" stroke="#a6a6d2" stroke-width="0.8" rx="1.2"/>
<rect x="490.30" y="163.00" width="375.20" height="12.60" fill="url(#gf)" stroke="#a6a6d2" stroke-width="0.8" rx="1.2"/>
<rect x="388.15" y="91.45" width="5.60" height="5.60" fill="url(#gk)" stroke="#e6e6ec" stroke-width="0.9" rx="1"/>
<rect x="388.15" y="105.25" width="5.60" height="5.60" fill="url(#gk)" stroke="#e6e6ec" stroke-width="0.9" rx="1"/>
<rect x="493.05" y="178.65" width="5.60" height="5.60" fill="url(#gk)" stroke="#e6e6ec" stroke-width="0.9" rx="1"/>
<path d="M493.90 181.30 L495.50 183.20 L498.10 179.00" stroke="#111" stroke-width="1.5" fill="none"/>
<rect x="553.25" y="178.65" width="5.60" height="5.60" fill="url(#gk)" stroke="#e6e6ec" stroke-width="0.9" rx="1"/>
<path d="M554.10 181.30 L555.70 183.20 L558.30 179.00" stroke="#111" stroke-width="1.5" fill="none"/>
<rect x="474.40" y="194.80" width="170.60" height="14.00" fill="url(#gb)" stroke="#5c7eb0" stroke-width="1.2" rx="2.4"/>
<text x="508.6" y="204.94" font-family="DejaVu Sans, Liberation Sans, sans-serif" font-size="7.5" fill="#222" textLength="103.2" lengthAdjust="spacingAndGlyphs">Modelos Asociados / Parámetros</text>
<rect x="673.40" y="194.80" width="79.00" height="14.00" fill="url(#gb)" stroke="#5c7eb0" stroke-width="1.2" rx="2.4"/>
<text x="689.5" y="204.94" font-family="DejaVu Sans, Liberation Sans, sans-serif" font-size="7.5" fill="#222" textLength="46.5" lengthAdjust="spacingAndGlyphs">Sentencia SQL</text>
<rect x="342.62" y="227.72" width="545.15" height="120.95" fill="none" stroke="#e9e9e9" stroke-width="1.25" rx="2"/>
<rect x="365.3" y="226.1" width="118.25" height="4" fill="#c0c0c0"/>
<text x="366.3" y="228.10" font-family="Liberation Sans, sans-serif" font-size="9.5" fill="#111" font-weight="bold" textLength="87.5" lengthAdjust="spacingAndGlyphs">Variables a Reemplazar</text>
<rect x="349.7" y="237.5" width="9.5" height="13.2" fill="#c0c0c0"/>
<path d="M350.2 250.7 L350.2 238.0 L359.2 238.0" stroke="#e8e8e8" stroke-width="1" fill="none"/>
<rect x="359.2" y="237.5" width="90.30000000000001" height="13.2" fill="#c0c0c0"/>
<path d="M359.7 250.7 L359.7 238.0 L449.5 238.0" stroke="#e8e8e8" stroke-width="1" fill="none"/>
<text x="361.2" y="246.30" font-family="Liberation Sans, sans-serif" font-size="9.5" fill="#111" font-weight="bold" textLength="29.6" lengthAdjust="spacingAndGlyphs">Variable</text>
<rect x="449.5" y="237.5" width="98.0" height="13.2" fill="#c0c0c0"/>
<path d="M450.0 250.7 L450.0 238.0 L547.5 238.0" stroke="#e8e8e8" stroke-width="1" fill="none"/>
<text x="451.5" y="246.30" font-family="Liberation Sans, sans-serif" font-size="9.5" fill="#111" font-weight="bold" textLength="44.7" lengthAdjust="spacingAndGlyphs">Descripción</text>
<rect x="547.5" y="237.5" width="110.70000000000005" height="13.2" fill="#c0c0c0"/>
<path d="M548.0 250.7 L548.0 238.0 L658.2 238.0" stroke="#e8e8e8" stroke-width="1" fill="none"/>
<text x="549.5" y="246.30" font-family="Liberation Sans, sans-serif" font-size="9.5" fill="#111" font-weight="bold" textLength="65" lengthAdjust="spacingAndGlyphs">Fórmula del valor</text>
<rect x="658.2" y="237.5" width="45.0" height="13.2" fill="#c0c0c0"/>
<path d="M658.7 250.7 L658.7 238.0 L703.2 238.0" stroke="#e8e8e8" stroke-width="1" fill="none"/>
<text x="660.8000000000001" y="246.30" font-family="Liberation Sans, sans-serif" font-size="9.5" fill="#111" font-weight="bold" textLength="34.5" lengthAdjust="spacingAndGlyphs">Tipo dato</text>
<rect x="703.2" y="237.5" width="56.799999999999955" height="13.2" fill="#c0c0c0"/>
<path d="M703.7 250.7 L703.7 238.0 L760.0 238.0" stroke="#e8e8e8" stroke-width="1" fill="none"/>
<text x="705.8000000000001" y="246.30" font-family="Liberation Sans, sans-serif" font-size="9.5" fill="#111" font-weight="bold" textLength="41" lengthAdjust="spacingAndGlyphs">Orig. datos</text>
<rect x="760" y="237.5" width="68.70000000000005" height="13.2" fill="#c0c0c0"/>
<path d="M760.5 250.7 L760.5 238.0 L828.7 238.0" stroke="#e8e8e8" stroke-width="1" fill="none"/>
<text x="762.6" y="246.30" font-family="Liberation Sans, sans-serif" font-size="9.5" fill="#111" font-weight="bold" textLength="31.3" lengthAdjust="spacingAndGlyphs">Dominio</text>
<rect x="828.7" y="237.5" width="31.899999999999977" height="13.2" fill="#c0c0c0"/>
<path d="M829.2 250.7 L829.2 238.0 L860.6 238.0" stroke="#e8e8e8" stroke-width="1" fill="none"/>
<text x="830.5000000000001" y="246.30" font-family="Liberation Sans, sans-serif" font-size="9.5" fill="#111" font-weight="bold" textLength="15.4" lengthAdjust="spacingAndGlyphs">CxD</text>
<rect x="860.6" y="237.5" width="20.399999999999977" height="13.2" fill="#c0c0c0"/>
<path d="M861.1 250.7 L861.1 238.0 L881.0 238.0" stroke="#e8e8e8" stroke-width="1" fill="none"/>
<text x="862.4000000000001" y="246.30" font-family="Liberation Sans, sans-serif" font-size="9.5" fill="#111" font-weight="bold" textLength="16.2" lengthAdjust="spacingAndGlyphs">Csc.</text>
<rect x="349.7" y="250.6" width="9.5" height="13.31" fill="#c0c0c0"/>
<path d="M350.2 263.90999999999997 L350.2 251.1 L359.2 251.1" stroke="#e8e8e8" stroke-width="1" fill="none"/>
<rect x="359.50" y="250.70" width="90.20" height="13.30" fill="url(#gs)" stroke="#9a9ad2" stroke-width="0.8" rx="1.2"/>
<rect x="449.80" y="250.70" width="98.00" height="13.30" fill="url(#gs)" stroke="#9a9ad2" stroke-width="0.8" rx="1.2"/>
<rect x="547.80" y="250.70" width="110.60" height="13.30" fill="url(#gs)" stroke="#9a9ad2" stroke-width="0.8" rx="1.2"/>
<rect x="760.30" y="250.70" width="68.40" height="13.30" fill="url(#gs)" stroke="#9a9ad2" stroke-width="0.8" rx="1.2"/>
<text x="360.2" y="260.38" font-family="Liberation Sans, sans-serif" font-size="8.6" fill="#fff" textLength="65.8" lengthAdjust="spacingAndGlyphs">01.VACACION_TIPO</text>
<text x="548.3" y="260.38" font-family="Liberation Sans, sans-serif" font-size="8.6" fill="#fff" textLength="56.4" lengthAdjust="spacingAndGlyphs">VACACION_TIPO</text>
<rect x="658.70" y="251.10" width="42.20" height="12.50" fill="url(#gw)" stroke="#8fb4e0" stroke-width="1" rx="1"/>
<rect x="691.6000000000001" y="251.2" width="9.200000000000001" height="12.3" fill="#c4d6f0"/>
<path d="M691.6000000000001 251.2 L691.6000000000001 263.5" stroke="#a8c4e8" stroke-width="0.9" fill="none"/>
<path d="M693.90 255.45 L699.10 255.45 L696.50 259.55Z" fill="#23408e"/>
<text x="661" y="260.58" font-family="Liberation Sans, sans-serif" font-size="8.6" fill="#2a2a2a" textLength="26" lengthAdjust="spacingAndGlyphs">Caracter</text>
<rect x="703.70" y="251.10" width="55.40" height="12.50" fill="url(#gw)" stroke="#8fb4e0" stroke-width="1" rx="1"/>
<rect x="748.8000000000001" y="251.2" width="10.200000000000001" height="12.3" fill="#c4d6f0"/>
<path d="M748.8000000000001 251.2 L748.8000000000001 263.5" stroke="#a8c4e8" stroke-width="0.9" fill="none"/>
<path d="M751.60 255.45 L756.80 255.45 L754.20 259.55Z" fill="#23408e"/>
<text x="705.6" y="260.58" font-family="Liberation Sans, sans-serif" font-size="8.6" fill="#2a2a2a" textLength="25.6" lengthAdjust="spacingAndGlyphs">Ninguno</text>
<rect x="829.20" y="251.10" width="30.80" height="12.50" fill="url(#gw)" stroke="#8fb4e0" stroke-width="1" rx="1"/>
<rect x="849.5" y="251.2" width="10.4" height="12.3" fill="#c4d6f0"/>
<path d="M849.5 251.2 L849.5 263.5" stroke="#a8c4e8" stroke-width="0.9" fill="none"/>
<path d="M852.40 255.45 L857.60 255.45 L855.00 259.55Z" fill="#23408e"/>
<text x="830.8" y="260.58" font-family="Liberation Sans, sans-serif" font-size="8.6" fill="#2a2a2a" textLength="8.8" lengthAdjust="spacingAndGlyphs">No</text>
<rect x="862.65" y="252.05" width="5.30" height="5.30" fill="url(#gk)" stroke="#e6e6ec" stroke-width="0.9" rx="1"/>
<rect x="349.7" y="263.91" width="9.5" height="13.31" fill="#c0c0c0"/>
<path d="M350.2 277.22 L350.2 264.41 L359.2 264.41" stroke="#e8e8e8" stroke-width="1" fill="none"/>
<rect x="359.50" y="264.01" width="90.20" height="13.30" fill="url(#gw)" stroke="#9a9ad2" stroke-width="0.8" rx="1.2"/>
<rect x="449.80" y="264.01" width="98.00" height="13.30" fill="url(#gw)" stroke="#9a9ad2" stroke-width="0.8" rx="1.2"/>
<rect x="547.80" y="264.01" width="110.60" height="13.30" fill="url(#gc)" stroke="#9a9ad2" stroke-width="0.8" rx="1.2"/>
<rect x="760.30" y="264.01" width="68.40" height="13.30" fill="url(#gw)" stroke="#9a9ad2" stroke-width="0.8" rx="1.2"/>
<text x="360.2" y="273.69" font-family="Liberation Sans, sans-serif" font-size="8.6" fill="#383838" textLength="78" lengthAdjust="spacingAndGlyphs">02.SOCIEDAD_CODIGO</text>
<text x="548.3" y="273.69" font-family="Liberation Sans, sans-serif" font-size="8.6" fill="#0b6a48" textLength="69" lengthAdjust="spacingAndGlyphs">SOCIEDAD_CODIGO</text>
<rect x="658.70" y="264.41" width="42.20" height="12.50" fill="url(#gw)" stroke="#8fb4e0" stroke-width="1" rx="1"/>
<rect x="691.6000000000001" y="264.51000000000005" width="9.200000000000001" height="12.3" fill="#c4d6f0"/>
<path d="M691.6000000000001 264.51000000000005 L691.6000000000001 276.81" stroke="#a8c4e8" stroke-width="0.9" fill="none"/>
<path d="M693.90 268.76 L699.10 268.76 L696.50 272.86Z" fill="#23408e"/>
<text x="661" y="273.89" font-family="Liberation Sans, sans-serif" font-size="8.6" fill="#2a2a2a" textLength="24.5" lengthAdjust="spacingAndGlyphs">Número</text>
<rect x="703.70" y="264.41" width="55.40" height="12.50" fill="url(#gw)" stroke="#8fb4e0" stroke-width="1" rx="1"/>
<rect x="748.8000000000001" y="264.51000000000005" width="10.200000000000001" height="12.3" fill="#c4d6f0"/>
<path d="M748.8000000000001 264.51000000000005 L748.8000000000001 276.81" stroke="#a8c4e8" stroke-width="0.9" fill="none"/>
<path d="M751.60 268.76 L756.80 268.76 L754.20 272.86Z" fill="#23408e"/>
<text x="705.6" y="273.89" font-family="Liberation Sans, sans-serif" font-size="8.6" fill="#2a2a2a" textLength="25.6" lengthAdjust="spacingAndGlyphs">Ninguno</text>
<rect x="829.20" y="264.41" width="30.80" height="12.50" fill="url(#gw)" stroke="#8fb4e0" stroke-width="1" rx="1"/>
<rect x="849.5" y="264.51000000000005" width="10.4" height="12.3" fill="#c4d6f0"/>
<path d="M849.5 264.51000000000005 L849.5 276.81" stroke="#a8c4e8" stroke-width="0.9" fill="none"/>
<path d="M852.40 268.76 L857.60 268.76 L855.00 272.86Z" fill="#23408e"/>
<text x="830.8" y="273.89" font-family="Liberation Sans, sans-serif" font-size="8.6" fill="#2a2a2a" textLength="8.8" lengthAdjust="spacingAndGlyphs">No</text>
<rect x="862.65" y="265.36" width="5.30" height="5.30" fill="url(#gk)" stroke="#e6e6ec" stroke-width="0.9" rx="1"/>
<rect x="349.7" y="277.22" width="9.5" height="13.31" fill="#c0c0c0"/>
<path d="M350.2 290.53000000000003 L350.2 277.72 L359.2 277.72" stroke="#e8e8e8" stroke-width="1" fill="none"/>
<rect x="359.50" y="277.32" width="90.20" height="13.30" fill="url(#gw)" stroke="#9a9ad2" stroke-width="0.8" rx="1.2"/>
<rect x="449.80" y="277.32" width="98.00" height="13.30" fill="url(#gw)" stroke="#9a9ad2" stroke-width="0.8" rx="1.2"/>
<rect x="547.80" y="277.32" width="110.60" height="13.30" fill="url(#gc)" stroke="#9a9ad2" stroke-width="0.8" rx="1.2"/>
<rect x="760.30" y="277.32" width="68.40" height="13.30" fill="url(#gw)" stroke="#9a9ad2" stroke-width="0.8" rx="1.2"/>
<text x="360.2" y="287.00" font-family="Liberation Sans, sans-serif" font-size="8.6" fill="#383838" textLength="80.4" lengthAdjust="spacingAndGlyphs">03.SOCIEDAD_NOMBRE</text>
<text x="548.3" y="287.00" font-family="Liberation Sans, sans-serif" font-size="8.6" fill="#0b6a48" textLength="70.5" lengthAdjust="spacingAndGlyphs">SOCIEDAD_NOMBRE</text>
<rect x="658.70" y="277.72" width="42.20" height="12.50" fill="url(#gw)" stroke="#8fb4e0" stroke-width="1" rx="1"/>
<rect x="691.6000000000001" y="277.82000000000005" width="9.200000000000001" height="12.3" fill="#c4d6f0"/>
<path d="M691.6000000000001 277.82000000000005 L691.6000000000001 290.12" stroke="#a8c4e8" stroke-width="0.9" fill="none"/>
<path d="M693.90 282.07 L699.10 282.07 L696.50 286.17Z" fill="#23408e"/>
<text x="661" y="287.20" font-family="Liberation Sans, sans-serif" font-size="8.6" fill="#2a2a2a" textLength="26" lengthAdjust="spacingAndGlyphs">Caracter</text>
<rect x="703.70" y="277.72" width="55.40" height="12.50" fill="url(#gw)" stroke="#8fb4e0" stroke-width="1" rx="1"/>
<rect x="748.8000000000001" y="277.82000000000005" width="10.200000000000001" height="12.3" fill="#c4d6f0"/>
<path d="M748.8000000000001 277.82000000000005 L748.8000000000001 290.12" stroke="#a8c4e8" stroke-width="0.9" fill="none"/>
<path d="M751.60 282.07 L756.80 282.07 L754.20 286.17Z" fill="#23408e"/>
<text x="705.6" y="287.20" font-family="Liberation Sans, sans-serif" font-size="8.6" fill="#2a2a2a" textLength="25.6" lengthAdjust="spacingAndGlyphs">Ninguno</text>
<rect x="829.20" y="277.72" width="30.80" height="12.50" fill="url(#gw)" stroke="#8fb4e0" stroke-width="1" rx="1"/>
<rect x="849.5" y="277.82000000000005" width="10.4" height="12.3" fill="#c4d6f0"/>
<path d="M849.5 277.82000000000005 L849.5 290.12" stroke="#a8c4e8" stroke-width="0.9" fill="none"/>
<path d="M852.40 282.07 L857.60 282.07 L855.00 286.17Z" fill="#23408e"/>
<text x="830.8" y="287.20" font-family="Liberation Sans, sans-serif" font-size="8.6" fill="#2a2a2a" textLength="8.8" lengthAdjust="spacingAndGlyphs">No</text>
<rect x="862.65" y="278.67" width="5.30" height="5.30" fill="url(#gk)" stroke="#e6e6ec" stroke-width="0.9" rx="1"/>
<rect x="349.7" y="290.53" width="9.5" height="13.31" fill="#c0c0c0"/>
<path d="M350.2 303.84 L350.2 291.03 L359.2 291.03" stroke="#e8e8e8" stroke-width="1" fill="none"/>
<rect x="359.50" y="290.63" width="90.20" height="13.30" fill="url(#gw)" stroke="#9a9ad2" stroke-width="0.8" rx="1.2"/>
<rect x="449.80" y="290.63" width="98.00" height="13.30" fill="url(#gw)" stroke="#9a9ad2" stroke-width="0.8" rx="1.2"/>
<rect x="547.80" y="290.63" width="110.60" height="13.30" fill="url(#gc)" stroke="#9a9ad2" stroke-width="0.8" rx="1.2"/>
<rect x="760.30" y="290.63" width="68.40" height="13.30" fill="url(#gw)" stroke="#9a9ad2" stroke-width="0.8" rx="1.2"/>
<text x="360.2" y="300.31" font-family="Liberation Sans, sans-serif" font-size="8.6" fill="#383838" textLength="71.7" lengthAdjust="spacingAndGlyphs">04.CENCOS_CODIGO</text>
<text x="548.3" y="300.31" font-family="Liberation Sans, sans-serif" font-size="8.6" fill="#0b6a48" textLength="62" lengthAdjust="spacingAndGlyphs">CENCOS_CODIGO</text>
<rect x="658.70" y="291.03" width="42.20" height="12.50" fill="url(#gw)" stroke="#8fb4e0" stroke-width="1" rx="1"/>
<rect x="691.6000000000001" y="291.13" width="9.200000000000001" height="12.3" fill="#c4d6f0"/>
<path d="M691.6000000000001 291.13 L691.6000000000001 303.42999999999995" stroke="#a8c4e8" stroke-width="0.9" fill="none"/>
<path d="M693.90 295.38 L699.10 295.38 L696.50 299.48Z" fill="#23408e"/>
<text x="661" y="300.51" font-family="Liberation Sans, sans-serif" font-size="8.6" fill="#2a2a2a" textLength="26" lengthAdjust="spacingAndGlyphs">Caracter</text>
<rect x="703.70" y="291.03" width="55.40" height="12.50" fill="url(#gw)" stroke="#8fb4e0" stroke-width="1" rx="1"/>
<rect x="748.8000000000001" y="291.13" width="10.200000000000001" height="12.3" fill="#c4d6f0"/>
<path d="M748.8000000000001 291.13 L748.8000000000001 303.42999999999995" stroke="#a8c4e8" stroke-width="0.9" fill="none"/>
<path d="M751.60 295.38 L756.80 295.38 L754.20 299.48Z" fill="#23408e"/>
<text x="705.6" y="300.51" font-family="Liberation Sans, sans-serif" font-size="8.6" fill="#2a2a2a" textLength="25.6" lengthAdjust="spacingAndGlyphs">Ninguno</text>
<rect x="829.20" y="291.03" width="30.80" height="12.50" fill="url(#gw)" stroke="#8fb4e0" stroke-width="1" rx="1"/>
<rect x="849.5" y="291.13" width="10.4" height="12.3" fill="#c4d6f0"/>
<path d="M849.5 291.13 L849.5 303.42999999999995" stroke="#a8c4e8" stroke-width="0.9" fill="none"/>
<path d="M852.40 295.38 L857.60 295.38 L855.00 299.48Z" fill="#23408e"/>
<text x="830.8" y="300.51" font-family="Liberation Sans, sans-serif" font-size="8.6" fill="#2a2a2a" textLength="8.8" lengthAdjust="spacingAndGlyphs">No</text>
<rect x="862.65" y="291.98" width="5.30" height="5.30" fill="url(#gk)" stroke="#e6e6ec" stroke-width="0.9" rx="1"/>
<rect x="349.7" y="303.84" width="9.5" height="13.31" fill="#c0c0c0"/>
<path d="M350.2 317.15 L350.2 304.34 L359.2 304.34" stroke="#e8e8e8" stroke-width="1" fill="none"/>
<rect x="359.50" y="303.94" width="90.20" height="13.30" fill="url(#gw)" stroke="#9a9ad2" stroke-width="0.8" rx="1.2"/>
<rect x="449.80" y="303.94" width="98.00" height="13.30" fill="url(#gw)" stroke="#9a9ad2" stroke-width="0.8" rx="1.2"/>
<rect x="547.80" y="303.94" width="110.60" height="13.30" fill="url(#gc)" stroke="#9a9ad2" stroke-width="0.8" rx="1.2"/>
<rect x="760.30" y="303.94" width="68.40" height="13.30" fill="url(#gw)" stroke="#9a9ad2" stroke-width="0.8" rx="1.2"/>
<text x="360.2" y="313.62" font-family="Liberation Sans, sans-serif" font-size="8.6" fill="#383838" textLength="73.7" lengthAdjust="spacingAndGlyphs">05.CENCOS_NOMBRE</text>
<text x="548.3" y="313.62" font-family="Liberation Sans, sans-serif" font-size="8.6" fill="#0b6a48" textLength="63.7" lengthAdjust="spacingAndGlyphs">CENCOS_NOMBRE</text>
<rect x="658.70" y="304.34" width="42.20" height="12.50" fill="url(#gw)" stroke="#8fb4e0" stroke-width="1" rx="1"/>
<rect x="691.6000000000001" y="304.44" width="9.200000000000001" height="12.3" fill="#c4d6f0"/>
<path d="M691.6000000000001 304.44 L691.6000000000001 316.73999999999995" stroke="#a8c4e8" stroke-width="0.9" fill="none"/>
<path d="M693.90 308.69 L699.10 308.69 L696.50 312.79Z" fill="#23408e"/>
<text x="661" y="313.82" font-family="Liberation Sans, sans-serif" font-size="8.6" fill="#2a2a2a" textLength="26" lengthAdjust="spacingAndGlyphs">Caracter</text>
<rect x="703.70" y="304.34" width="55.40" height="12.50" fill="url(#gw)" stroke="#8fb4e0" stroke-width="1" rx="1"/>
<rect x="748.8000000000001" y="304.44" width="10.200000000000001" height="12.3" fill="#c4d6f0"/>
<path d="M748.8000000000001 304.44 L748.8000000000001 316.73999999999995" stroke="#a8c4e8" stroke-width="0.9" fill="none"/>
<path d="M751.60 308.69 L756.80 308.69 L754.20 312.79Z" fill="#23408e"/>
<text x="705.6" y="313.82" font-family="Liberation Sans, sans-serif" font-size="8.6" fill="#2a2a2a" textLength="25.6" lengthAdjust="spacingAndGlyphs">Ninguno</text>
<rect x="829.20" y="304.34" width="30.80" height="12.50" fill="url(#gw)" stroke="#8fb4e0" stroke-width="1" rx="1"/>
<rect x="849.5" y="304.44" width="10.4" height="12.3" fill="#c4d6f0"/>
<path d="M849.5 304.44 L849.5 316.73999999999995" stroke="#a8c4e8" stroke-width="0.9" fill="none"/>
<path d="M852.40 308.69 L857.60 308.69 L855.00 312.79Z" fill="#23408e"/>
<text x="830.8" y="313.82" font-family="Liberation Sans, sans-serif" font-size="8.6" fill="#2a2a2a" textLength="8.8" lengthAdjust="spacingAndGlyphs">No</text>
<rect x="862.65" y="305.29" width="5.30" height="5.30" fill="url(#gk)" stroke="#e6e6ec" stroke-width="0.9" rx="1"/>
<rect x="349.7" y="317.15" width="9.5" height="13.31" fill="#c0c0c0"/>
<path d="M350.2 330.46 L350.2 317.65 L359.2 317.65" stroke="#e8e8e8" stroke-width="1" fill="none"/>
<rect x="359.50" y="317.25" width="90.20" height="13.30" fill="url(#gw)" stroke="#9a9ad2" stroke-width="0.8" rx="1.2"/>
<rect x="449.80" y="317.25" width="98.00" height="13.30" fill="url(#gw)" stroke="#9a9ad2" stroke-width="0.8" rx="1.2"/>
<rect x="547.80" y="317.25" width="110.60" height="13.30" fill="url(#gc)" stroke="#9a9ad2" stroke-width="0.8" rx="1.2"/>
<rect x="760.30" y="317.25" width="68.40" height="13.30" fill="url(#gw)" stroke="#9a9ad2" stroke-width="0.8" rx="1.2"/>
<text x="360.2" y="326.93" font-family="Liberation Sans, sans-serif" font-size="8.6" fill="#383838" textLength="56.8" lengthAdjust="spacingAndGlyphs">06.EMP_CODIGO</text>
<text x="548.3" y="326.93" font-family="Liberation Sans, sans-serif" font-size="8.6" fill="#0b6a48" textLength="46.9" lengthAdjust="spacingAndGlyphs">EMP_CODIGO</text>
<rect x="658.70" y="317.65" width="42.20" height="12.50" fill="url(#gw)" stroke="#8fb4e0" stroke-width="1" rx="1"/>
<rect x="691.6000000000001" y="317.75" width="9.200000000000001" height="12.3" fill="#c4d6f0"/>
<path d="M691.6000000000001 317.75 L691.6000000000001 330.04999999999995" stroke="#a8c4e8" stroke-width="0.9" fill="none"/>
<path d="M693.90 322.00 L699.10 322.00 L696.50 326.10Z" fill="#23408e"/>
<text x="661" y="327.13" font-family="Liberation Sans, sans-serif" font-size="8.6" fill="#2a2a2a" textLength="26" lengthAdjust="spacingAndGlyphs">Caracter</text>
<rect x="703.70" y="317.65" width="55.40" height="12.50" fill="url(#gw)" stroke="#8fb4e0" stroke-width="1" rx="1"/>
<rect x="748.8000000000001" y="317.75" width="10.200000000000001" height="12.3" fill="#c4d6f0"/>
<path d="M748.8000000000001 317.75 L748.8000000000001 330.04999999999995" stroke="#a8c4e8" stroke-width="0.9" fill="none"/>
<path d="M751.60 322.00 L756.80 322.00 L754.20 326.10Z" fill="#23408e"/>
<text x="705.6" y="327.13" font-family="Liberation Sans, sans-serif" font-size="8.6" fill="#2a2a2a" textLength="25.6" lengthAdjust="spacingAndGlyphs">Ninguno</text>
<rect x="829.20" y="317.65" width="30.80" height="12.50" fill="url(#gw)" stroke="#8fb4e0" stroke-width="1" rx="1"/>
<rect x="849.5" y="317.75" width="10.4" height="12.3" fill="#c4d6f0"/>
<path d="M849.5 317.75 L849.5 330.04999999999995" stroke="#a8c4e8" stroke-width="0.9" fill="none"/>
<path d="M852.40 322.00 L857.60 322.00 L855.00 326.10Z" fill="#23408e"/>
<text x="830.8" y="327.13" font-family="Liberation Sans, sans-serif" font-size="8.6" fill="#2a2a2a" textLength="8.8" lengthAdjust="spacingAndGlyphs">No</text>
<rect x="862.65" y="318.60" width="5.30" height="5.30" fill="url(#gk)" stroke="#e6e6ec" stroke-width="0.9" rx="1"/>
<rect x="349.7" y="330.46" width="9.5" height="13.31" fill="#c0c0c0"/>
<path d="M350.2 343.77 L350.2 330.96 L359.2 330.96" stroke="#e8e8e8" stroke-width="1" fill="none"/>
<rect x="359.50" y="330.56" width="90.20" height="13.30" fill="url(#gw)" stroke="#9a9ad2" stroke-width="0.8" rx="1.2"/>
<rect x="449.80" y="330.56" width="98.00" height="13.30" fill="url(#gw)" stroke="#9a9ad2" stroke-width="0.8" rx="1.2"/>
<rect x="547.80" y="330.56" width="110.60" height="13.30" fill="url(#gc)" stroke="#9a9ad2" stroke-width="0.8" rx="1.2"/>
<rect x="760.30" y="330.56" width="68.40" height="13.30" fill="url(#gw)" stroke="#9a9ad2" stroke-width="0.8" rx="1.2"/>
<text x="360.2" y="340.24" font-family="Liberation Sans, sans-serif" font-size="8.6" fill="#383838" textLength="47.2" lengthAdjust="spacingAndGlyphs">07.APELLIDO1</text>
<text x="548.3" y="340.24" font-family="Liberation Sans, sans-serif" font-size="8.6" fill="#0b6a48" textLength="37.1" lengthAdjust="spacingAndGlyphs">APELLIDO1</text>
<rect x="658.70" y="330.96" width="42.20" height="12.50" fill="url(#gw)" stroke="#8fb4e0" stroke-width="1" rx="1"/>
<rect x="691.6000000000001" y="331.06" width="9.200000000000001" height="12.3" fill="#c4d6f0"/>
<path d="M691.6000000000001 331.06 L691.6000000000001 343.35999999999996" stroke="#a8c4e8" stroke-width="0.9" fill="none"/>
<path d="M693.90 335.31 L699.10 335.31 L696.50 339.41Z" fill="#23408e"/>
<text x="661" y="340.44" font-family="Liberation Sans, sans-serif" font-size="8.6" fill="#2a2a2a" textLength="26" lengthAdjust="spacingAndGlyphs">Caracter</text>
<rect x="703.70" y="330.96" width="55.40" height="12.50" fill="url(#gw)" stroke="#8fb4e0" stroke-width="1" rx="1"/>
<rect x="748.8000000000001" y="331.06" width="10.200000000000001" height="12.3" fill="#c4d6f0"/>
<path d="M748.8000000000001 331.06 L748.8000000000001 343.35999999999996" stroke="#a8c4e8" stroke-width="0.9" fill="none"/>
<path d="M751.60 335.31 L756.80 335.31 L754.20 339.41Z" fill="#23408e"/>
<text x="705.6" y="340.44" font-family="Liberation Sans, sans-serif" font-size="8.6" fill="#2a2a2a" textLength="25.6" lengthAdjust="spacingAndGlyphs">Ninguno</text>
<rect x="829.20" y="330.96" width="30.80" height="12.50" fill="url(#gw)" stroke="#8fb4e0" stroke-width="1" rx="1"/>
<rect x="849.5" y="331.06" width="10.4" height="12.3" fill="#c4d6f0"/>
<path d="M849.5 331.06 L849.5 343.35999999999996" stroke="#a8c4e8" stroke-width="0.9" fill="none"/>
<path d="M852.40 335.31 L857.60 335.31 L855.00 339.41Z" fill="#23408e"/>
<text x="830.8" y="340.44" font-family="Liberation Sans, sans-serif" font-size="8.6" fill="#2a2a2a" textLength="8.8" lengthAdjust="spacingAndGlyphs">No</text>
<rect x="862.65" y="331.91" width="5.30" height="5.30" fill="url(#gk)" stroke="#e6e6ec" stroke-width="0.9" rx="1"/>
<rect x="870.9" y="250.8" width="10.4" height="90.4" fill="#e6e6e6"/>
<rect x="871.95" y="258.95" width="8.30" height="72.30" fill="url(#gtr)" stroke="#a8a8a8" stroke-width="0.7" rx="4.4"/>
<rect x="872.60" y="263.90" width="7.00" height="21.60" fill="url(#gth)" stroke="#2458b4" stroke-width="1" rx="4"/>
<path d="M873.7 257.6 L876.2 253.8 L878.7 257.6Z" fill="#111"/><path d="M873.7 335.2 L876.2 339 L878.7 335.2Z" fill="#111"/>
<rect x="242.7" y="366.4" width="715" height="15" fill="#c8d7ef"/>
<text x="244.5" y="375.54" font-family="Liberation Sans, sans-serif" font-size="9.9" fill="#222" textLength="13.8" lengthAdjust="spacingAndGlyphs">Lov</text>
<path d="M273.40000000000003 368 L273.40000000000003 380" stroke="#e8eef8" stroke-width="0.9" fill="none"/>
<path d="M274.3 368 L274.3 380" stroke="#4a4a4a" stroke-width="0.9" fill="none"/>
<path d="M854.3000000000001 368 L854.3000000000001 380" stroke="#e8eef8" stroke-width="0.9" fill="none"/>
<path d="M855.2 368 L855.2 380" stroke="#4a4a4a" stroke-width="0.9" fill="none"/>
<path d="M933.6 368 L933.6 380" stroke="#e8eef8" stroke-width="0.9" fill="none"/>
<path d="M934.5 368 L934.5 380" stroke="#4a4a4a" stroke-width="0.9" fill="none"/>
<path d="M869.7 366.6 L869.7 381.2" stroke="#ffffff" stroke-width="1" fill="none"/>
<text x="937.6" y="375.54" font-family="Liberation Sans, sans-serif" font-size="9.9" fill="#222" textLength="15.4" lengthAdjust="spacingAndGlyphs">1 / 1</text>
<rect x="242.7" y="381.4" width="715" height="10.6" fill="#f1f1f1"/>
<rect x="252.7" y="383" width="705" height="8.4" fill="#c1c1c1"/>
<path d="M249.2 384.8 L246.6 387.1 L249.2 389.4Z" fill="#a3a3a3"/>
<rect x="3.9" y="391.8" width="954" height="48" fill="#000"/>
<rect x="4.7" y="414.7" width="25.5" height="20.1" fill="#fff" rx="3"/>
<rect x="109.2" y="414.7" width="25.8" height="20.1" fill="#fff" rx="3"/>
<rect x="138.6" y="414.7" width="25.6" height="20.1" fill="#fff" rx="3"/>
<rect x="167.8" y="414.7" width="25.9" height="20.1" fill="#fff" rx="3"/>
<g transform="translate(12.6 420.4)"><path d="M5 0.2 L9.8 4.9 L8.5 4.9 L8.5 10.2 L6 10.2 L6 6.8 L4 6.8 L4 10.2 L1.5 10.2 L1.5 4.9 L0.2 4.9Z" fill="#222"/></g>
<g transform="translate(117.6 421.4)"><path d="M1 0.4 v8.6" stroke="#222" stroke-width="1.5"/><path d="M5.6 0.8 L1.8 4.7 L5.6 8.6Z M9.6 0.8 L5.8 4.7 L9.6 8.6Z" fill="#222"/></g>
<g transform="translate(148.2 422)"><path d="M1.2 0 v8.4 M4.6 0 v8.4" stroke="#222" stroke-width="1.9"/></g>
<g transform="translate(175.8 421.4)"><path d="M9 0.4 v8.6" stroke="#222" stroke-width="1.5"/><path d="M0.4 0.8 L4.2 4.7 L0.4 8.6Z M4.4 0.8 L8.2 4.7 L4.4 8.6Z" fill="#222"/></g>
<g transform="translate(763.8 391.6)"><rect x="0.2" y="0.2" width="58" height="62" rx="9.6" fill="#0c52ba"/><rect x="0.6" y="0.6" width="57.2" height="62" rx="9.3" fill="#1c96ee"/><rect x="2.6" y="2.6" width="53.2" height="60" rx="7.6" fill="#0b3fa4"/><rect x="4.6" y="4.8" width="49.2" height="58" rx="6" fill="#cfd4ea"/><rect x="5.1" y="5.4" width="48.2" height="58" rx="5.6" fill="url(#gtile)"/><path d="M5.1 34.7 Q29.2 18.9 53.3 34.7 L53.3 62 L5.1 62Z" fill="url(#gdome)"/><path d="M23.5 10.6 q2.1 0 2.1 2.5 q0 1.5-.8 2.3 l.2 1 q2.5.6 3 1.8 l.7 4.8 q.1 1.500-.8 1.800 l-1-.4 l.4 8 l-.5 .2 l-.7 15 h-2.900 l-.5-12.600 l-1 12.600 h-3.100 l.7-15 l-.4-8 l-1.300.7 q-1-.3-.8-1.800 l1-5.300 q.5-1.200 3-1.800 l.2-1 q-.8-.8-.8-2.300 q0-2.500 2.100-2.500Z" fill="#ebebeb"/><path d="M17.400 27.600 L14 47.600" stroke="#f2f2f2" stroke-width="1"/><path d="M40.100 10.600 q2.200 0 2.200 2.600 q0 1.500-.8 2.300 l.2 1 q2.800.6 3.500 1.900 l.9 9.600 q0 1.200-.8 1.500 l-1-.3 l-.4 4.800 l-.4 14 h-3.200 l-.5-12.400 l-.9 12.400 h-3.300 l.5-14 l-.4-5 l-1.200.4 q-1-.4-.9-1.600 l1-9.400 q.7-1.300 3.500-1.900 l.2-1 q-.8-.8-.8-2.300 q0-2.600 2.200-2.600Z" fill="#dedede"/><path d="M32 33.800 h3 l.4 9.800 h-3.600Z" fill="#d6d6d6"/></g>
<g transform="translate(826.2 391.6)"><rect x="0.2" y="0.2" width="58" height="62" rx="9.6" fill="#0c52ba"/><rect x="0.6" y="0.6" width="57.2" height="62" rx="9.3" fill="#1c96ee"/><rect x="2.6" y="2.6" width="53.2" height="60" rx="7.6" fill="#0b3fa4"/><rect x="4.6" y="4.8" width="49.2" height="58" rx="6" fill="#cfd4ea"/><rect x="5.1" y="5.4" width="48.2" height="58" rx="5.6" fill="url(#gtile)"/><path d="M5.1 34.7 Q29.2 18.9 53.3 34.7 L53.3 62 L5.1 62Z" fill="url(#gdome)"/><path d="M29.5 10.2 q6.4 0 6.4 8.2 q0 6-2.6 9 l.2 4 h-8 l.2-4 q-2.6-3-2.6-9 q0-8.2 6.4-8.2Z" fill="#f4f4f4"/><path d="M16.8 48 v-11 q1-5 8.4-6.6 l4.3 4 l4.3-4 q7.4 1.600 8.400 6.600 v11Z" fill="#e6e6e6"/><path d="M25.400 31.400 l4.100 3.800 l4.100-3.800 l.8 16.600 h-9.800Z" fill="#f8f8f8"/><path d="M27.400 35 l1.600 2 l-1 10 h-1.600Z M31.600 35 l-1.600 2 l1 10 h1.600Z" fill="#28c0ea"/><path d="M28.600 34.800 h1.800 l.5 1.800 l-1.400 1 l-1.400-1Z" fill="#eeeeee"/></g>
<g transform="translate(888.6 391.6)"><rect x="0.2" y="0.2" width="58" height="62" rx="9.6" fill="#0c52ba"/><rect x="0.6" y="0.6" width="57.2" height="62" rx="9.3" fill="#1c96ee"/><rect x="2.6" y="2.6" width="53.2" height="60" rx="7.6" fill="#0b3fa4"/><rect x="4.6" y="4.8" width="49.2" height="58" rx="6" fill="#cfd4ea"/><rect x="5.1" y="5.4" width="48.2" height="58" rx="5.6" fill="url(#gtile)"/><path d="M5.1 34.7 Q29.2 18.9 53.3 34.7 L53.3 62 L5.1 62Z" fill="url(#gdome)"/><path d="M13.400 48 v-6.800 h3.500 v-24 h4.500 v24 h3.600 v-13 l5.200-5 v5 l5.200-5 v5 l5.200-5 v17.800 h2.400 v7Z" fill="#e4e4e4"/><path d="M20.600 13.200 q4.600-5.400 9.600-2.800 q4.600 2.400 9.400-1.400 l.2 2.800 q-5 4.200-9.800 1.600 q-4.800-2.400-9 2.400Z" fill="#f6f6f6"/></g>
<g transform="translate(950.2 391.6)"><rect x="0.2" y="0.2" width="58" height="62" rx="9.6" fill="#0c52ba"/><rect x="0.6" y="0.6" width="57.2" height="62" rx="9.3" fill="#1c96ee"/><rect x="2.6" y="2.6" width="53.2" height="60" rx="7.6" fill="#0b3fa4"/><rect x="4.6" y="4.8" width="49.2" height="58" rx="6" fill="#cfd4ea"/><rect x="5.1" y="5.4" width="48.2" height="58" rx="5.6" fill="url(#gtile)"/><path d="M5.1 34.7 Q29.2 18.9 53.3 34.7 L53.3 62 L5.1 62Z" fill="url(#gdome)"/></g>
</svg>
</body></html>
